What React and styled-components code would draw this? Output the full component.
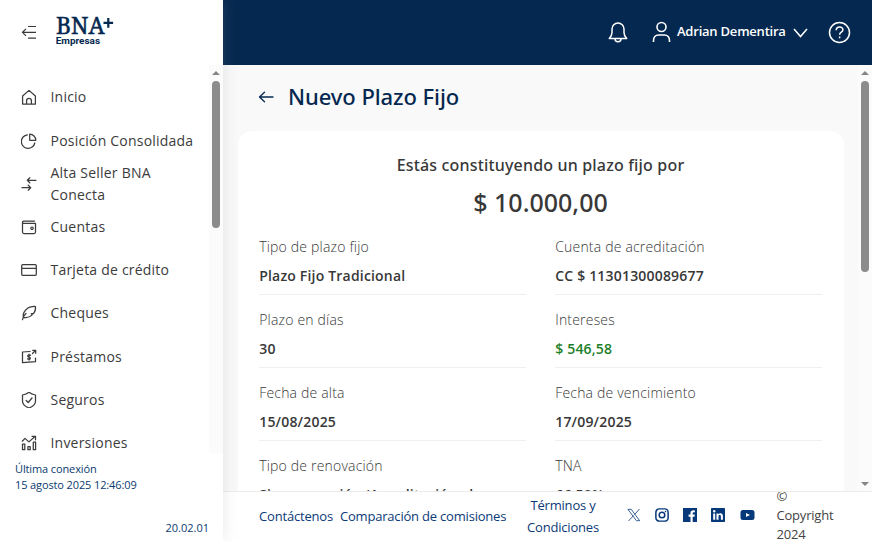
import React from "react";
import styled, { createGlobalStyle } from "styled-components";

const Global = createGlobalStyle`
  *, *::before, *::after { box-sizing: border-box; }
  body { margin: 0; overflow: hidden; font-family: "Open Sans", "Noto Sans", sans-serif; color: #383838; }
  ul, dl, dd, h1, h2, p { margin: 0; padding: 0; }
  svg { display: block; flex: none; }
  a { text-decoration: none; }
`;

const Page = styled.div`
  display: grid;
  grid-template-columns: 223px 649px;
  width: 872px;
  height: 541px;
  overflow: hidden;
  background: #fff;
`;

const Sidebar = styled.aside`
  position: relative;
  z-index: 1;
  display: grid;
  grid-template-rows: 65px 388px 88px;
  height: 541px;
  background: #fff;
  box-shadow: 0 0 15px rgba(150, 150, 150, 0.22);
`;

const Brand = styled.div`
  display: flex;
  align-items: flex-start;
  padding: 12px 0 0 21px;
  gap: 19px;
  & > svg:first-child { margin-top: 13px; }
`;

const MenuArea = styled.div`
  display: grid;
  grid-template-columns: 209px 14px;
  overflow: hidden;
`;

const Menu = styled.ul`
  list-style: none;
  padding-top: 10.71px;
`;

const MenuItem = styled.li`
  display: grid;
  grid-template-columns: 18px 150px;
  column-gap: 11.5px;
  align-items: center;
  height: 43.23px;
  padding-left: 21px;
  font-size: 14px;
  line-height: 22px;
  letter-spacing: 0.21px;
  color: #3c3c3c;
`;

const SideFoot = styled.div`
  display: flex;
  flex-direction: column;
  justify-content: space-between;
  padding: 8px 14px 5px 15px;
  font-size: 11px;
  line-height: 16px;
  letter-spacing: -0.12px;
  color: #0a3a70;
`;

const Version = styled.p`
  text-align: right;
  letter-spacing: 0;
`;

const Bar = styled.div`
  display: flex;
  flex-direction: column;
  align-items: center;
  padding: 6px 0 5px;
  background: #fbfbfb;
`;

const Thumb = styled.div`
  width: 8px;
  height: ${(p) => p.$length}px;
  margin: 6px 0 auto;
  border-radius: 4px;
  background: #8b8b8b;
`;

const Content = styled.div`
  display: grid;
  grid-template-rows: 65px 426px 50px;
  height: 541px;
`;

const Header = styled.header`
  display: flex;
  align-items: center;
  justify-content: flex-end;
  padding-right: 21px;
  background: #052850;
  color: #fff;
`;

const User = styled.div`
  display: flex;
  align-items: center;
  margin: 0 20px 0 23px;
  font-size: 13px;
  font-weight: 600;
  line-height: 18px;
  & > span { width: 110px; margin: -3px 6px 0 6px; white-space: nowrap; letter-spacing: -0.22px; }
  & > svg:first-child { margin-top: -1px; }
`;

const Main = styled.main`
  display: grid;
  grid-template-columns: 635px 14px;
  overflow: hidden;
  background: #f9f9f9;
`;

const Scroll = styled.div`
  padding: 0 14px 0 15px;
  overflow: hidden;
`;

const TitleRow = styled.div`
  display: flex;
  align-items: center;
  gap: 14px;
  height: 66px;
  padding-left: 20px;
  color: #052850;
  & > svg { margin-top: -2px; }
`;

const Title = styled.h1`
  font: 500 22px/30px "Noto Sans", sans-serif;
  letter-spacing: -0.07px;
  white-space: nowrap;
  margin-top: -4px;
`;

const Card = styled.section`
  height: 480px;
  padding: 22px 22px 0 21px;
  border-radius: 14px;
  background: #fff;
`;

const CardTitle = styled.h2`
  font: 500 16px/24px "Noto Sans", sans-serif;
  letter-spacing: 0.17px;
  text-align: center;
`;

const Amount = styled.p`
  margin-top: 7px;
  font: 500 25px/36px "Noto Sans", sans-serif;
  text-align: center;
`;

const Fields = styled.dl`
  display: grid;
  grid-template-columns: 267px 267px;
  column-gap: 29px;
  row-gap: 14px;
  margin-top: 16px;
`;

const Field = styled.div`
  height: 59px;
  padding-left: 0.2px;
  border-bottom: 1px solid #efefef;
  font-size: 14px;
  letter-spacing: 0.19px;
  white-space: nowrap;
  & > dt { line-height: 22px; font-weight: 300; }
  & > dd {
    margin-top: 7px;
    line-height: 22px;
    font-weight: 600;
    color: ${(p) => (p.$positive ? "#1b7f28" : "inherit")};
  }
`;

const Footer = styled.footer`
  display: flex;
  align-items: center;
  height: 50px;
  padding: 0 0 2px 36px;
  border-top: 1px solid #ebebeb;
  background: #fff;
  overflow: hidden;
  color: #0b3a78;
`;

const FootLink = styled.a`
  flex: none;
  width: ${(p) => p.$width}px;
  margin-right: ${(p) => p.$gap}px;
  font-size: 13px;
  line-height: 22px;
  letter-spacing: -0.2px;
  text-align: center;
  color: inherit;
  white-space: ${(p) => (p.$wrap ? "normal" : "nowrap")};
`;

const Social = styled.div`
  display: flex;
  gap: 14.3px;
  margin: -1px 21.8px 0 -0.5px;
  color: #06397a;
`;

const Copyright = styled.p`
  width: 60px;
  font-size: 13px;
  line-height: 19px;
  letter-spacing: -0.2px;
  color: #444;
`;

const Stroke = ({ children, size = 16, box = 16, w = 1.25 }) => (
  <svg width={size} height={size} viewBox={`0 0 ${box} ${box}`} fill="none" stroke="currentColor" strokeWidth={w} strokeLinecap="round" strokeLinejoin="round">
    {children}
  </svg>
);

const icons = {
  home: <path d="M1.6 7 8 1.4 14.4 7v8H1.6ZM5.6 15v-3.2a2.4 2.4 0 0 1 4.8 0V15" />,
  pie: <path d="M6.4 1.8A6.8 6.8 0 1 0 13.8 10M8.7 1.2v6.1h6.1a6.1 6.1 0 0 0-6.1-6.1Z" />,
  transfer: <path d="M15 4.3H6.3M8.8 1.8 6.3 4.3l2.5 2.5M1 11.7h8.7M7.2 9.2l2.5 2.5-2.5 2.5" />,
  wallet: <><path d="M1.5 3.8V13q0 1.5 1.5 1.5h10q1.500 0 1.500-1.500V4.300H2.500q-1 0-1-1.100t1-1.100H13.500" /><circle cx="11" cy="9.300" r="1.200" /></>,
  card: <><rect x=".7" y="2.700" width="14.600" height="10.600" rx="1" /><path d="M1 6.300h14" /></>,
  feather: <path d="M1.500 14.700C2 12 3 10.200 5 8.500M2.300 12.800C1.200 6 7 1.200 14.500 1.500c.2 3.300-.5 5.500-2 7.100l-2.200.1.900 1.200C8.600 12.500 5.600 13 2.600 12.400" />,
  loan: <><path d="M9 2.500 1.500 3v10.700l13-1V9M11.500 4.500 14.700 1.300M11.700 1.300h3v3" /><path d="M9.700 6.300c-2.800-1.300-4 .8-2 1.600 2.700.9 1.800 3-1.200 1.900M8.100 5v6" /></>,
  shield: <path d="M8 .2C6 1.800 4 2.500 1.500 3v6c0 3.500 3 5.700 6.500 7 3.500-1.300 6.500-3.500 6.500-7V3C12 2.500 10 1.800 8 .2ZM5.200 8.500l2 2L11 6" />,
  invest: <path d="M1.300 6.200 4 3.400l3.900 3.500 6.400-5.600M11 1.300h3.500v3.500M1.500 9h2.300v5.700H1.500ZM6.900 11.700h2.300v3H6.900ZM12.300 7.200h2.300v7.500h-2.300Z" />,
};

const menu = [
  ["home", "Inicio"],
  ["pie", "Posición Consolidada"],
  ["transfer", "Alta Seller BNA Conecta"],
  ["wallet", "Cuentas"],
  ["card", "Tarjeta de crédito"],
  ["feather", "Cheques"],
  ["loan", "Préstamos"],
  ["shield", "Seguros"],
  ["invest", "Inversiones"],
];

const fields = [
  ["Tipo de plazo fijo", "Plazo Fijo Tradicional"],
  ["Cuenta de acreditación", "CC $ 11301300089677"],
  ["Plazo en días", "30"],
  ["Intereses", "$ 546,58", true],
  ["Fecha de alta", "15/08/2025"],
  ["Fecha de vencimiento", "17/09/2025"],
  ["Tipo de renovación", "Sin renovación (Acreditación al"],
  ["TNA", "66,50%"],
];

const Logo = () => (
  <svg width="62" height="36" viewBox="0 0 62 36" fill="#052850">
    <text x="0" y="22.300" fontFamily="'Noto Serif', 'DejaVu Serif', serif" fontSize="23" textLength="48.500" lengthAdjust="spacingAndGlyphs" stroke="#052850" strokeWidth=".5">BNA</text>
    <path d="M51.200 6h2.200v3.700h3.700v2.200h-3.700v3.900h-2.200v-3.900h-3.700V9.700h3.700Z" />
    <text x="-.3" y="32.400" fontFamily="Roboto, 'Liberation Sans', sans-serif" fontWeight="700" fontSize="9.200" textLength="44.300" lengthAdjust="spacingAndGlyphs">Empresas</text>
  </svg>
);

const Scrollbar = ({ length }) => (
  <Bar>
    <svg width="8" height="4" viewBox="0 0 8 4" fill="#858585"><path d="M0 4 4 0l4 4Z" /></svg>
    <Thumb $length={length} />
    <svg width="8" height="4" viewBox="0 0 8 4" fill="#858585"><path d="M0 0h8L4 4Z" /></svg>
  </Bar>
);

export default function App() {
  return (
    <Page>
      <Global />
      <Sidebar>
        <Brand>
          <svg width="16" height="15" viewBox="0 0 16 15" fill="none" stroke="#3a3a3a" strokeWidth="1.200"><path d="M7 1.500h8M1.500 7.300H15M7 13.200h8M5 3.800 1.500 7.300 5 10.800" /></svg>
          <Logo />
        </Brand>
        <MenuArea>
          <Menu>
            {menu.map(([icon, label]) => (
              <MenuItem key={label}><Stroke>{icons[icon]}</Stroke><span>{label}</span></MenuItem>
            ))}
          </Menu>
          <Scrollbar length={147} />
        </MenuArea>
        <SideFoot>
          <p>Última conexión<br />15 agosto 2025 12:46:09</p>
          <Version>20.02.01</Version>
        </SideFoot>
      </Sidebar>
      <Content>
        <Header>
          <svg width="20" height="22" viewBox="0 0 20 22" fill="none" stroke="#fff" strokeWidth="1.500" strokeLinejoin="round"><path d="M1.300 16.500c2-2 2.700-3.500 2.700-6V7a6 6 0 0 1 12 0v3.500c0 2.500.7 4 2.700 6ZM7 16.700a3 3 0 0 0 6 0" /></svg>
          <User>
            <svg width="20" height="22" viewBox="0 0 20 22" fill="none" stroke="#fff" strokeWidth="1.600"><circle cx="10.500" cy="6" r="4.500" /><path d="M2.500 21v-1.500c0-3 2-5.500 5-5.500h6c3 0 5 2.500 5 5.500V21" /></svg>
            <span>Adrian Dementira</span>
            <svg width="15" height="10" viewBox="0 0 15 10" fill="none" stroke="#fff" strokeWidth="1.500"><path d="m1 1 6.500 7.500L14 1" /></svg>
          </User>
          <svg width="23" height="23" viewBox="0 0 23 23" fill="none" stroke="#fff" strokeWidth="1.500"><circle cx="11.500" cy="11.500" r="10" /><path d="M8.200 9.300c.1-4.600 7-4.200 6.700-.3-.2 2.300-3.300 2-3.300 4.700M11.600 15.500v1.700" /></svg>
        </Header>
        <Main>
          <Scroll>
            <TitleRow>
              <Stroke w={1.300}><path d="M15 8H1.500M6.500 3.300 1.500 8l5 4.700" /></Stroke>
              <Title>Nuevo Plazo Fijo</Title>
            </TitleRow>
            <Card>
              <CardTitle>Estás constituyendo un plazo fijo por</CardTitle>
              <Amount>$ 10.000,00</Amount>
              <Fields>
                {fields.map(([label, value, positive]) => (
                  <Field key={label} $positive={positive}><dt>{label}</dt><dd>{value}</dd></Field>
                ))}
              </Fields>
            </Card>
          </Scroll>
          <Scrollbar length={191} />
        </Main>
        <Footer>
          <FootLink $width={74} $gap={7}>Contáctenos</FootLink>
          <FootLink $width={166} $gap={19}>Comparación de comisiones</FootLink>
          <FootLink $width={76} $gap={26} $wrap>Términos y Condiciones</FootLink>
          <Social>
            <Stroke size={14} w={0.9}><path d="M1.500 1.500h3.300l9.700 13h-3.300ZM14 1.500 8.900 7.200M7.200 9 2 14.500" /></Stroke>
            <Stroke size={14} w={1.700}><rect x="1" y="1" width="14" height="14" rx="4" /><circle cx="8" cy="8" r="3.200" /><path d="M12 4h.1" /></Stroke>
            <svg width="14" height="14" viewBox="0 0 14 14" fill="currentColor"><path fillRule="evenodd" d="M0 0h14v14H9.700V8.700h1.800l.3-2.100H9.700V5.300q0-1 1.100-1h1.100V2.400q-4.400-.7-4.400 2.500v1.700H5.600v2.100h1.900V14H0Z" /></svg>
            <svg width="14" height="14" viewBox="0 0 14 14"><rect width="14" height="14" rx=".7" fill="currentColor" /><g fill="#fff"><circle cx="3.200" cy="3.300" r="1.200" /><path d="M2.200 5.500h2v6.300h-2ZM5.500 5.500h1.900v.9c1.200-1.800 4.500-1.400 4.500 1.600v3.800h-2V8.500c0-2-2.400-1.900-2.400 0v3.300h-2Z" /></g></svg>
            <svg width="15" height="14" viewBox="0 0 15 14"><rect x=".5" y="2" width="14" height="10" rx="2.500" fill="currentColor" /><path d="m6 5 4 2-4 2Z" fill="#fff" /></svg>
          </Social>
          <Copyright>© Copyright 2024</Copyright>
        </Footer>
      </Content>
    </Page>
  );
}
